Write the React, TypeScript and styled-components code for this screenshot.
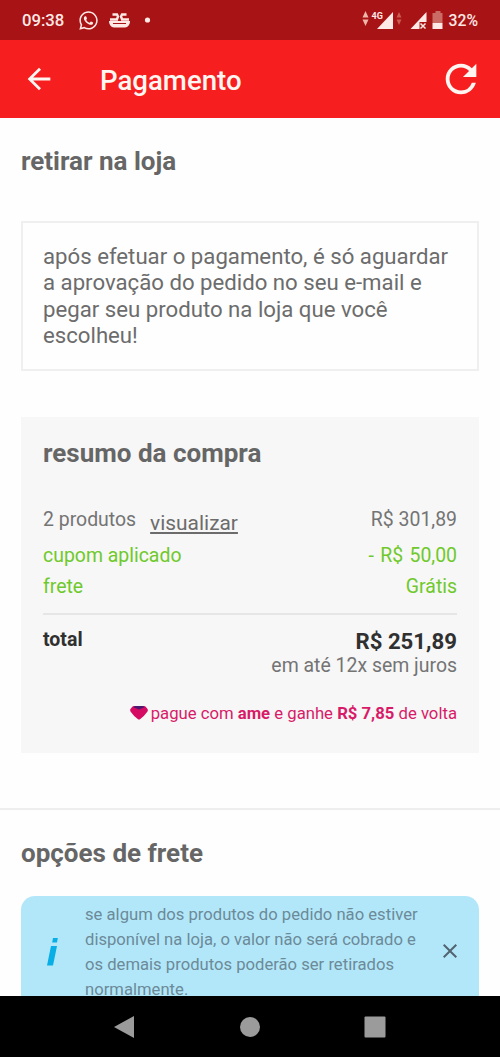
import React from "react";
import styled, { createGlobalStyle } from "styled-components";
import { FaWhatsapp } from "react-icons/fa";
import { MdArrowBack, MdRefresh, MdClose } from "react-icons/md";

const GlobalStyle = createGlobalStyle`
  * { box-sizing: border-box; }
  body { margin: 0; background: #fff; font-family: Roboto, "Liberation Sans", sans-serif; color: #6c6c6c; }
`;

const Screen = styled.div`
  width: 500px;
  height: 1057px;
  display: flex;
  flex-direction: column;
  overflow: hidden;
  background: #fefefe;
`;

const StatusBar = styled.div`
  flex: none;
  height: 40px;
  padding: 0 22px;
  display: flex;
  align-items: center;
  justify-content: space-between;
  background: #a81315;
  color: #ffe9e6;
`;

const StatusGroup = styled.div<{ $gap: number }>`
  display: flex;
  align-items: center;
  gap: ${(p) => p.$gap}px;
  svg { display: block; flex: none; }
`;

const StatusText = styled.span<{ $size: number }>`
  font-size: ${(p) => p.$size}px;
  font-weight: 500;
  line-height: 20px;
  margin: 2px 4px 0 0;
  &:last-child { margin-right: 0; }
`;

const Toolbar = styled.header`
  flex: none;
  height: 78px;
  display: flex;
  align-items: center;
  background: #f71e1f;
  color: #fff6f2;
  padding: 0 16px 0 22px;
  svg { display: block; }
`;

const ToolbarTitle = styled.h1`
  flex: 1;
  margin: 3px 0 0 44px;
  font-size: 27.6px;
  font-weight: 500;
  line-height: 32px;
`;

const Content = styled.main`
  flex: 1;
  min-height: 0;
  overflow: hidden;
`;

const Section = styled.section`
  padding: 28px 21px 0;
`;

const Heading = styled.h2`
  margin: 0;
  font-size: 26px;
  font-weight: 700;
  line-height: 30px;
  color: #666;
  white-space: nowrap;
`;

const PickupBox = styled.p`
  margin: 45px 0 0;
  height: 150px;
  padding: 20px 20px;
  border: 2px solid #efefef;
  font-size: 22.2px;
  line-height: 26.4px;
  white-space: nowrap;
`;

const Summary = styled.div`
  margin-top: 46px;
  height: 336px;
  padding: 21px 22px 0;
  background: #f7f7f7;
`;

const Row = styled.div<{ $tone?: "green"; $height: number }>`
  display: flex;
  justify-content: space-between;
  align-items: flex-start;
  height: ${(p) => p.$height}px;
  font-size: 19.45px;
  line-height: 24px;
  white-space: nowrap;
  color: ${(p) => (p.$tone === "green" ? "#6fc92c" : "#747474")};
`;

const Discount = styled.span`
  word-spacing: 1.5px;
`;

const Rows = styled.div`
  margin-top: 40px;
  padding-bottom: 12px;
  border-bottom: 2px solid #e6e6e6;
`;

const ViewLink = styled.a`
  display: inline-block;
  margin: 3px 0 0 14px;
  font-size: 20.9px;
  color: #6c6c6c;
  text-decoration: underline;
  text-underline-offset: 2px;
`;

const Label = styled.div`
  display: flex;
`;

const Total = styled.div`
  display: flex;
  justify-content: space-between;
  margin-top: 12px;
  white-space: nowrap;
  color: #303030;
`;

const TotalLabel = styled.strong`
  font-size: 19.5px;
  line-height: 26px;
`;

const TotalValue = styled.div`
  padding-top: 2px;
  text-align: right;
`;

const Price = styled.strong`
  display: block;
  font-size: 22.2px;
  line-height: 25px;
`;

const Installments = styled.span`
  display: block;
  font-size: 19.45px;
  line-height: 24px;
  color: #747474;
`;

const Cashback = styled.div`
  display: flex;
  justify-content: flex-end;
  align-items: center;
  margin-top: 24px;
  font-size: 16.7px;
  line-height: 24px;
  color: #d81b68;
  white-space: nowrap;
  svg { margin: 0 3px 3px 0; }
`;

const Divider = styled.hr`
  margin: 55px 0 0;
  border: 0;
  height: 2px;
  background: #eeeeee;
`;

const Notice = styled.div`
  margin-top: 28px;
  height: 130px;
  display: flex;
  border-radius: 14px;
  background: #b2e7fa;
  color: #6c8a98;
`;

const NoticeIcon = styled.div`
  flex: none;
  width: 64px;
  padding: 42px 0 0 26px;
`;

const NoticeText = styled.p`
  flex: 1;
  margin: 6px 0 0;
  font-size: 16.65px;
  line-height: 25px;
  white-space: nowrap;
`;

const CloseButton = styled.button`
  flex: none;
  width: 58px;
  height: 24px;
  margin-top: 43px;
  padding: 0;
  border: 0;
  background: none;
  color: #51646f;
  display: flex;
  align-items: center;
  justify-content: center;
`;

const NavBar = styled.nav`
  flex: none;
  height: 61px;
  display: grid;
  grid-template-columns: repeat(3, 125px);
  justify-content: center;
  align-items: center;
  justify-items: center;
  background: #000;
`;

const NavGlyph = ({ children }: { children: React.ReactNode }) => (
  <svg width="24" height="24" viewBox="0 0 24 24" fill="#9b9b9b">{children}</svg>
);

export default function App() {
  return (
    <Screen>
      <GlobalStyle />
      <StatusBar>
        <StatusGroup $gap={10}>
          <StatusText $size={16.7}>09:38</StatusText>
          <FaWhatsapp size={21} />
          <svg width="44" height="20" viewBox="0 0 44 20">
            <path d="M0 11h21c0 3.500-2 6.500-5 6.500H5c-3 0-5-3-5-6.500z" fill="#ffe9e6" />
            <path d="M1 9.500h6M14 9.500h6M3.500 4.500H8l1 2-1.500 4M17.500 4.500H13l-1 2 1.500 4" fill="none" stroke="#ffe9e6" strokeWidth="2.400" />
            <path d="M4 13.500h13" stroke="#a81315" />
            <circle cx="38.500" cy="10" r="2.600" fill="#ffe9e6" />
          </svg>
        </StatusGroup>
        <StatusGroup $gap={5}>
          <svg width="82" height="20" viewBox="0 0 82 20" fill="#ffe9e6">
            <path d="M3.500 1L6.500 7.500H.5zM3.500 16L.5 9.500h6z" fill="#edb8a8" />
            <text x="9.500" y="8.500" fontSize="9" fontWeight="700" fontFamily="Roboto">4G</text>
            <path d="M31 2v17H15z" />
            <path d="M37 2l2.500 5.500h-5zM37 15l-2.500-5.500h5z" fill="#cc5a50" />
            <path d="M64.500 2v10h-7v7H48.500z" />
            <path d="M58.500 13.500l5 5m0-5l-5 5" stroke="#ffe9e6" strokeWidth="1.500" />
            <path d="M73.500 1h5v2h2v10h-10V3h3z" fill="#cb6b65" />
            <path d="M70.500 13h10v6h-10z" />
          </svg>
          <StatusText $size={15.7}>32%</StatusText>
        </StatusGroup>
      </StatusBar>
      <Toolbar>
        <MdArrowBack size={34} />
        <ToolbarTitle>Pagamento</ToolbarTitle>
        <MdRefresh size={46} />
      </Toolbar>
      <Content>
        <Section>
          <Heading>retirar na loja</Heading>
          <PickupBox>
            após efetuar o pagamento, é só aguardar<br />
            a aprovação do pedido no seu e-mail e<br />
            pegar seu produto na loja que você<br />
            escolheu!
          </PickupBox>
          <Summary>
            <Heading>resumo da compra</Heading>
            <Rows>
              <Row $height={36}>
                <Label>2 produtos <ViewLink>visualizar</ViewLink></Label>
                <span>R$ 301,89</span>
              </Row>
              <Row $height={31} $tone="green"><span>cupom aplicado</span><Discount>- R$ 50,00</Discount></Row>
              <Row $height={26} $tone="green"><span>frete</span><span>Grátis</span></Row>
            </Rows>
            <Total>
              <TotalLabel>total</TotalLabel>
              <TotalValue>
                <Price>R$ 251,89</Price>
                <Installments>em até 12x sem juros</Installments>
              </TotalValue>
            </Total>
            <Cashback>
              <svg width="18" height="14" viewBox="0 0 18 14">
                <path d="M4 0h10q1 0 1.700.8L17.500 3q.8 1.200-.2 2.700Q14 10.500 10 13.200q-1 .8-2 0Q4 10.500.7 5.700-.3 4.200.5 3L2.300.8Q3 0 4 0z" fill="#d40a63" />
                <path d="M5 0h8l1.500 1.200L9 3.500 3.500 1.200z" fill="#4a1a70" />
              </svg>
              <span>pague com <b>ame</b> e ganhe <b>R$ 7,85</b> de volta</span>
            </Cashback>
          </Summary>
        </Section>
        <Divider />
        <Section>
          <Heading>opções de frete</Heading>
          <Notice>
            <NoticeIcon>
              <svg width="12" height="29" viewBox="0 0 12 29" fill="#08aee5">
                <path d="M6 0h4.800L10 4.500H5.200zM4 8h6L6 27.500H0z" />
              </svg>
            </NoticeIcon>
            <NoticeText>
              se algum dos produtos do pedido não estiver<br />
              disponível na loja, o valor não será cobrado e<br />
              os demais produtos poderão ser retirados<br />
              normalmente.
            </NoticeText>
            <CloseButton aria-label="fechar"><MdClose size={24} /></CloseButton>
          </Notice>
        </Section>
      </Content>
      <NavBar>
        <NavGlyph><path d="M21 1v22L1 12z" /></NavGlyph>
        <NavGlyph><circle cx="12" cy="12" r="10" /></NavGlyph>
        <NavGlyph><rect x="1.500" y="1.500" width="21" height="21" rx="1" /></NavGlyph>
      </NavBar>
    </Screen>
  );
}
